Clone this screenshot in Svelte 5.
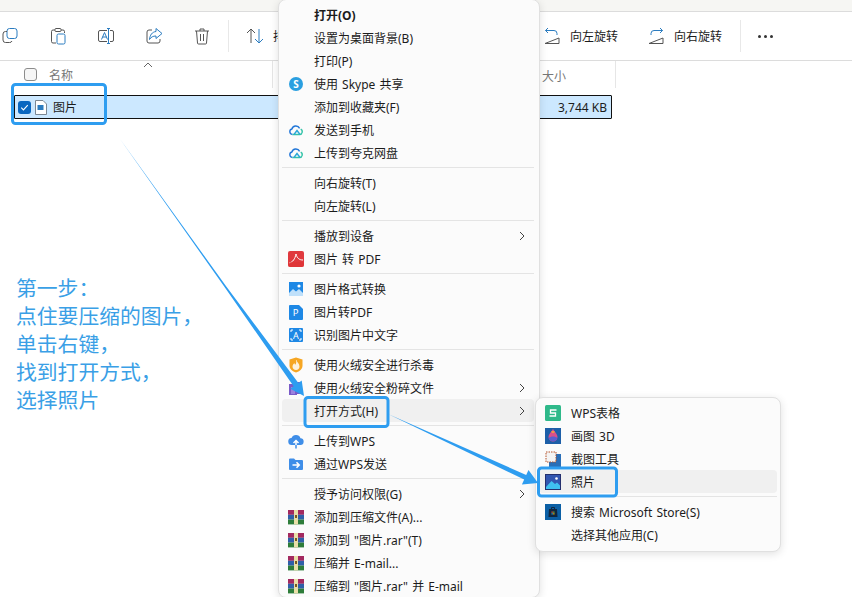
<script lang="ts">
	type Row = { label?: string; icon?: string; bold?: boolean; more?: boolean; hover?: boolean; sep?: boolean };

	const menu: Row[] = [
		{ label: '打开(O)', bold: true },
		{ label: '设置为桌面背景(B)' },
		{ label: '打印(P)' },
		{ label: '使用 Skype 共享', icon: 'skype' },
		{ label: '添加到收藏夹(F)' },
		{ label: '发送到手机', icon: 'cloud' },
		{ label: '上传到夸克网盘', icon: 'cloud' },
		{ sep: true },
		{ label: '向右旋转(T)' },
		{ label: '向左旋转(L)' },
		{ sep: true },
		{ label: '播放到设备', more: true },
		{ label: '图片 转 PDF', icon: 'pdf' },
		{ sep: true },
		{ label: '图片格式转换', icon: 'image' },
		{ label: '图片转PDF', icon: 'pdoc' },
		{ label: '识别图片中文字', icon: 'scan' },
		{ sep: true },
		{ label: '使用火绒安全进行杀毒', icon: 'shield' },
		{ label: '使用火绒安全粉碎文件', icon: 'shred', more: true },
		{ label: '打开方式(H)', more: true, hover: true },
		{ sep: true },
		{ label: '上传到WPS', icon: 'upload' },
		{ label: '通过WPS发送', icon: 'send' },
		{ sep: true },
		{ label: '授予访问权限(G)', more: true },
		{ label: '添加到压缩文件(A)...', icon: 'rar' },
		{ label: '添加到 "图片.rar"(T)', icon: 'rar' },
		{ label: '压缩并 E-mail...', icon: 'rar' },
		{ label: '压缩到 "图片.rar" 并 E-mail', icon: 'rar' }
	];

	const submenu: Row[] = [
		{ label: 'WPS表格', icon: 'wps' },
		{ label: '画图 3D', icon: 'paint' },
		{ label: '截图工具', icon: 'snip' },
		{ label: '照片', icon: 'photos', hover: true },
		{ sep: true },
		{ label: '搜索 Microsoft Store(S)', icon: 'store' },
		{ label: '选择其他应用(C)' }
	];

	const steps = ['第一步：', '点住要压缩的图片，', '单击右键，', '找到打开方式，', '选择照片'];
</script>

{#snippet icon(name: string | undefined)}
	<span class="icon">
		{#if name === 'skype'}
			<svg viewBox="0 0 16 16"><circle cx="8" cy="8" r="7" fill="#2a9fe0" /><text x="8" y="11.6" class="glyph" font-size="10">S</text></svg>
		{:else if name === 'cloud'}
			<svg viewBox="0 0 16 16" fill="none" stroke-width="1.4"><path d="M4.5 12.500a2.800 2.800 0 0 1-.6-5.500A4.100 4.100 0 0 1 11.600 6.400" stroke="#2277d8" /><path d="M4.500 12.500H11.500a2.800 2.800 0 0 0 1.200-5.300" stroke="#35c4a8" /><path d="M6 12.500l3-4 3 4" stroke="#2aa6d8" /></svg>
		{:else if name === 'pdf'}
			<svg viewBox="0 0 16 16"><rect width="16" height="16" rx="2" fill="#e0393e" /><path d="M1 12c4-1 6-4 7-9 1 4 3 6 7 6" fill="none" stroke="#fff" stroke-width="1" /><rect y="11" width="16" height="5" rx="2" fill="#d33" opacity=".6" /></svg>
		{:else if name === 'image'}
			<svg viewBox="0 0 16 16"><rect x="1" y="1" width="14" height="14" fill="#1e88e5" /><circle cx="11" cy="5" r="1.6" fill="#fff" /><path d="M1 12l4-4 3 2.500L11 8l4 4v3H1z" fill="#bfe0fa" /></svg>
		{:else if name === 'pdoc'}
			<svg viewBox="0 0 16 16"><path d="M1 2a1 1 0 0 1 1-1h9l4 4v10a1 1 0 0 1-1 1H2a1 1 0 0 1-1-1z" fill="#1e88e5" /><text x="7.600" y="12" class="glyph thin" font-size="9.500">P</text></svg>
		{:else if name === 'scan'}
			<svg viewBox="0 0 16 16"><rect x="1" y="1" width="14" height="14" rx="1" fill="#1e88e5" /><path d="M3 5V3h2M11 3h2v2M13 11v2h-2M5 13H3v-2" fill="none" stroke="#fff" /><text x="8" y="11.500" class="glyph thin" font-size="9">A</text></svg>
		{:else if name === 'shield'}
			<svg viewBox="0 0 16 16"><path d="M8 .5l6.500 2v6c0 3.500-3 6-6.500 7-3.500-1-6.500-3.500-6.500-7v-6z" fill="#f6a623" /><path d="M8.500 3c.5 2.500 3 3.500 3 6.500 0 2-1.500 3.500-3.500 3.500s-3.500-1.500-3.500-3.500c0-1.500 1-2.500 2-3.500 0 1 .5 1.500 1 1.500.7-1 1-2.500.5-4.500z" fill="#fdf1dc" /></svg>
		{:else if name === 'shred'}
			<svg viewBox="0 0 16 16"><path d="M1 4h4V2h9v9h1v3H9v1H1z" fill="#7a5bc8" /><rect x="3" y="7" width="4" height="7" fill="#9b82de" /></svg>
		{:else if name === 'upload'}
			<svg viewBox="0 0 16 16"><path d="M4 12a3.500 3.500 0 0 1-.5-7A4.800 4.800 0 0 1 12.500 5.200 3.400 3.400 0 0 1 12 12z" fill="#3f8ee8" /><path d="M8 12V8M5.500 10L8 7.500 10.500 10" fill="none" stroke="#fff" stroke-width="1.500" /><path d="M8 15.500V12" stroke="#3f8ee8" stroke-width="1.500" /></svg>
		{:else if name === 'send'}
			<svg viewBox="0 0 16 16"><path d="M1 3.500A1 1 0 0 1 2 2.500h4l1.500 1.500H14a1 1 0 0 1 1 1V13a1 1 0 0 1-1 1H2a1 1 0 0 1-1-1z" fill="#3f8ee8" /><path d="M4.500 9h6.500M8.500 6.300L11.200 9l-2.700 2.700" fill="none" stroke="#fff" stroke-width="1.600" /></svg>
		{:else if name === 'rar'}
			<svg viewBox="0 0 16 16"><rect y="1" width="16" height="4.800" fill="#a3295f" /><rect y="5.800" width="16" height="4.800" fill="#2f5fa8" /><rect y="10.600" width="16" height="4.800" fill="#2e7d3a" /><rect x="6" y="1" width="4" height="14.400" fill="#e9dfa8" /><rect x="7" y="6" width="2" height="3" fill="#7a5a20" /></svg>
		{:else if name === 'wps'}
			<svg viewBox="0 0 16 16"><rect width="16" height="16" rx="1.500" fill="#2fb98a" /><path d="M11.500 5H5.500v3h5v3h-6" fill="none" stroke="#fff" stroke-width="1.300" /></svg>
		{:else if name === 'paint'}
			<svg viewBox="0 0 16 16"><rect width="16" height="16" fill="#1d5fa8" /><path d="M8 1c2.500 3.500 4.500 5.500 4.500 8a4.500 4.500 0 0 1-9 0C3.500 6.500 5.500 4.500 8 1z" fill="#d8508c" /><path d="M3.700 10a4.500 4.500 0 0 0 8.600 0C10 8 6 8 3.700 10z" fill="#5a5fd0" /><path d="M6 3.800C7 2.800 9 3 10 3.800 9 5.500 7 5.500 6 3.800z" fill="#f0a040" /></svg>
		{:else if name === 'snip'}
			<svg viewBox="0 0 16 16"><rect x="4" y="3" width="12" height="13" fill="#2a6fb8" /><rect x="1" y="1" width="10" height="10" fill="#f4f4f4" stroke="#b5532a" stroke-dasharray="1.500 1" /></svg>
		{:else if name === 'photos'}
			<svg viewBox="0 0 16 16"><rect width="16" height="16" fill="#24306e" /><rect x="1" y="1" width="14" height="14" fill="#3256b0" /><circle cx="11.500" cy="4.500" r="1.300" fill="#fff" /><path d="M1 13l5.500-6L10 10l2-1.500 3 3V15H1z" fill="#3fc0f0" /></svg>
		{:else if name === 'store'}
			<svg viewBox="0 0 16 16"><rect width="16" height="16" fill="#0b5fa5" /><path d="M4 5h8l.5 8h-9z" fill="#10263f" /><path d="M6.500 5V3.500h3V5" fill="none" stroke="#10263f" /><rect x="6.500" y="7.500" width="1.300" height="1.300" fill="#e0553a" /><rect x="8.200" y="7.500" width="1.300" height="1.300" fill="#6cb33f" /><rect x="6.500" y="9.200" width="1.300" height="1.300" fill="#2a9fe0" /><rect x="8.200" y="9.200" width="1.300" height="1.300" fill="#f4b400" /></svg>
		{/if}
	</span>
{/snippet}

{#snippet rows(list: Row[])}
	{#each list as row}
		{#if row.sep}
			<div class="sep"></div>
		{:else}
			<div class="row" class:hover={row.hover} class:bold={row.bold}>
				{@render icon(row.icon)}
				<span class="label">{row.label}</span>
				{#if row.more}
					<svg class="chevron" viewBox="0 0 8 10"><path d="M2 1l4 4-4 4" fill="none" stroke="#444" stroke-width="1" /></svg>
				{/if}
			</div>
		{/if}
	{/each}
{/snippet}

<div class="page">
	<div class="strip"></div>

	<div class="toolbar">
		<button class="tool" aria-label="复制">
			<svg viewBox="0 0 20 20" fill="none"><rect x="7" y="2.500" width="10" height="10" rx="2.500" stroke="#2b7cc0" /><path d="M7 5.500H5.500A2.500 2.500 0 0 0 3 8v6a2.500 2.500 0 0 0 2.500 2.500h4A2.500 2.500 0 0 0 12 15" stroke="#555" /></svg>
		</button>
		<button class="tool" aria-label="粘贴">
			<svg viewBox="0 0 20 20" fill="none"><path d="M7 4H5a1.500 1.500 0 0 0-1.500 1.500v10A1.500 1.500 0 0 0 5 17h3" stroke="#555" /><path d="M13 4h2a1.500 1.500 0 0 1 1.500 1.500V7" stroke="#555" /><rect x="7" y="2.500" width="6" height="3" rx="1" stroke="#555" /><rect x="9" y="8" width="8" height="10" rx="1.500" stroke="#2b7cc0" /></svg>
		</button>
		<button class="tool" aria-label="重命名">
			<svg viewBox="0 0 20 20" fill="none"><path d="M11 4.500H4A1.500 1.500 0 0 0 2.500 6v8A1.500 1.500 0 0 0 4 15.500h7M14 4.500h2A1.500 1.500 0 0 1 17.500 6v8a1.500 1.500 0 0 1-1.500 1.500h-2" stroke="#555" /><path d="M5.500 13.500L8.500 6.500 11.500 13.500M6.500 11h4" stroke="#2b7cc0" /><path d="M12.500 2.500v15M11 2.500h3M11 17.500h3" stroke="#2b7cc0" /></svg>
		</button>
		<button class="tool" aria-label="共享">
			<svg viewBox="0 0 20 20" fill="none"><path d="M8 4H5a2 2 0 0 0-2 2v9a2 2 0 0 0 2 2h9a2 2 0 0 0 2-2v-2" stroke="#555" /><path d="M12 2.500l6 5-6 5V10c-3 0-5 1-6.500 3.500C6 9 8 6 12 5.500z" stroke="#2b7cc0" stroke-linejoin="round" /></svg>
		</button>
		<button class="tool" aria-label="删除">
			<svg viewBox="0 0 20 20" fill="none" stroke="#555"><path d="M3 5h14M8 5V3h4v2M4.500 5l1 12a1 1 0 0 0 1 1h7a1 1 0 0 0 1-1l1-12M8.500 8v7M11.500 8v7" /></svg>
		</button>
		<div class="divider"></div>
		<button class="tool wide">
			<svg viewBox="0 0 20 20" fill="none"><path d="M6 17V3M2 7l4-4 4 4" stroke="#555" /><path d="M14 3v14M10 13l4 4 4-4" stroke="#2b7cc0" /></svg>
			<span>排序</span>
		</button>
		<div class="right">
			<button class="tool wide">
				<svg viewBox="0 0 20 20" fill="none"><path d="M3 17.500h14V12L3 17.500z" stroke="#555" /><path d="M6 2L3.500 4.500 6 7M3.500 4.500H12a3 3 0 0 1 3 3V9" stroke="#2b7cc0" /></svg>
				<span>向左旋转</span>
			</button>
			<button class="tool wide">
				<svg viewBox="0 0 20 20" fill="none"><path d="M17 17.500H3L17 12z" stroke="#555" /><path d="M14 2l2.500 2.500L14 7M16.500 4.500H8a3 3 0 0 0-3 3V9" stroke="#2b7cc0" /></svg>
				<span>向右旋转</span>
			</button>
			<div class="divider"></div>
			<div class="dots"><i></i><i></i><i></i></div>
		</div>
	</div>

	<div class="columns">
		<span class="check"></span>
		<span class="col-name">名称</span>
		<svg class="sort-mark" viewBox="0 0 10 6"><path d="M1 5l4-4 4 4" fill="none" stroke="#666" /></svg>
		<span class="col-size">大小</span>
	</div>

	<div class="file">
		<span class="check on">
			<svg viewBox="0 0 12 12"><path d="M3 6.200l2 2 4-4.400" fill="none" stroke="#fff" /></svg>
		</span>
		<svg class="file-icon" viewBox="0 0 12 15"><path d="M.5.500h7.500l3.500 3.500v10.500H.5z" fill="#fff" stroke="#7b8793" /><rect x="2.500" y="5" width="6" height="5" fill="#2b7cc0" /></svg>
		<span class="file-name">图片</span>
		<span class="file-size">3,744 KB</span>
	</div>

	<div class="menu">{@render rows(menu)}</div>
	<div class="menu sub">{@render rows(submenu)}</div>

	<div class="steps">
		{#each steps as step}
			<div>{step}</div>
		{/each}
	</div>

	<svg class="marks" viewBox="0 0 852 597">
		<rect x="12.500" y="84.500" width="93" height="39" rx="3" />
		<rect x="305" y="397.500" width="83" height="29" rx="3" />
		<rect x="538.500" y="468" width="78" height="28" rx="3" />
		<path class="fill" d="M120 139L226.300 286.500 298.400 382.900 301.700 380.500 304 396 290.300 388.700 293.600 386.300 224.900 287.500z" />
		<path class="fill" d="M388 414L526.200 474.900 528.500 469.900 538 483 521.900 484.500 524.200 479.500z" />
	</svg>
</div>

<style>
	:global(body) {
		margin: 0;
		background: #fff;
	}

	.page {
		position: relative;
		width: 852px;
		height: 597px;
		overflow: hidden;
		background: #fff;
		color: #1c1c1c;
		font-family: 'Noto Sans', 'Noto Sans CJK SC', sans-serif;
		font-size: 12px;
	}

	.strip {
		height: 11px;
		background: #f6f6f3;
	}

	.toolbar {
		display: flex;
		align-items: center;
		height: 48px;
		margin-left: -14px;
		border-top: 1px solid #dcdcdc;
		border-bottom: 1px solid #dcdcdc;
	}

	.tool {
		display: flex;
		align-items: center;
		justify-content: center;
		gap: 8px;
		width: 48px;
		height: 48px;
		padding: 0;
		border: 0;
		background: none;
		color: inherit;
		font: inherit;
	}

	.tool svg {
		width: 20px;
		height: 20px;
		flex: none;
	}

	.tool.wide {
		width: auto;
		white-space: nowrap;
	}

	.divider {
		width: 1px;
		height: 32px;
		margin: 0 16px 0 2px;
		background: #e8e8e8;
	}

	.right {
		display: flex;
		align-items: center;
		gap: 28px;
		margin-left: 245px;
	}

	.right .divider {
		margin: 0 -11px 0 -10px;
	}

	.dots {
		display: flex;
		gap: 3px;
	}

	.dots i {
		width: 3px;
		height: 3px;
		border-radius: 50%;
		background: #333;
	}

	.columns {
		position: relative;
		display: flex;
		align-items: center;
		height: 33px;
	}

	.check {
		flex: none;
		box-sizing: border-box;
		width: 13px;
		height: 13px;
		border: 1px solid #8c8c8c;
		border-radius: 3px;
		background: #f6f6f6;
	}

	.columns .check {
		margin-left: 24px;
		margin-top: -6px;
	}

	.col-name {
		margin-left: 12px;
		margin-top: -6px;
		color: #777;
	}

	.sort-mark {
		position: absolute;
		left: 143px;
		top: 1px;
		width: 10px;
		height: 6px;
	}

	.col-size {
		position: absolute;
		left: 542px;
		top: 6px;
		color: #777;
	}

	.columns::before,
	.columns::after {
		content: '';
		position: absolute;
		top: 0;
		width: 1px;
		height: 27px;
		background: #e6e6e6;
	}

	.columns::before {
		left: 272px;
	}

	.columns::after {
		left: 615px;
	}

	.file {
		box-sizing: border-box;
		display: flex;
		align-items: center;
		width: 598px;
		height: 24px;
		margin: 1px 0 0 14px;
		padding: 0 4px 0 3px;
		border: 1px solid #111;
		border-radius: 1px;
		background: #cce8ff;
	}

	.check.on {
		border: 0;
		background: #0a67c0;
		border-radius: 3px;
	}

	.check.on svg {
		display: block;
		width: 13px;
		height: 13px;
	}

	.file-icon {
		width: 12px;
		height: 15px;
		margin-left: 4px;
	}

	.file-name {
		margin-left: 6px;
	}

	.file-size {
		margin-left: auto;
	}

	.menu {
		position: absolute;
		left: 278px;
		top: -1px;
		box-sizing: border-box;
		width: 262px;
		padding: 3px 5px 0 3px;
		border: 1px solid #e0e0e0;
		border-radius: 8px;
		background: #fbfbfb;
		box-shadow: 0 2px 8px rgba(0, 0, 0, 0.12);
		word-spacing: 1px;
	}

	.menu.sub {
		left: 535px;
		top: 397px;
		width: 246px;
		padding: 3px 3px 5px;
	}

	.row {
		display: flex;
		align-items: center;
		height: 23px;
		padding-left: 6px;
		border-radius: 4px;
		white-space: nowrap;
	}

	.row.hover {
		background: #f0f0f0;
	}

	.row.bold {
		font-weight: 700;
	}

	.icon {
		flex: none;
		width: 16px;
		height: 16px;
		margin-right: 10px;
	}

	.icon svg {
		display: block;
		width: 16px;
		height: 16px;
	}

	.glyph {
		fill: #fff;
		text-anchor: middle;
		font-family: 'Noto Sans', sans-serif;
		font-weight: 700;
	}

	.glyph.thin {
		font-weight: 400;
	}

	.label {
		flex: 1;
	}

	.chevron {
		width: 8px;
		height: 10px;
		margin-right: 8px;
	}

	.sep {
		height: 1px;
		margin: 3px 0;
		background: #e4e4e4;
	}

	.steps {
		position: absolute;
		left: 16px;
		top: 274px;
		color: #3a9fe6;
		font-size: 20.8px;
		line-height: 28px;
		white-space: nowrap;
	}

	.marks {
		position: absolute;
		inset: 0;
		width: 852px;
		height: 597px;
		pointer-events: none;
	}

	.marks rect {
		fill: none;
		stroke: #2e9df0;
		stroke-width: 3;
	}

	.marks .fill {
		fill: #2e9df0;
	}
</style>
